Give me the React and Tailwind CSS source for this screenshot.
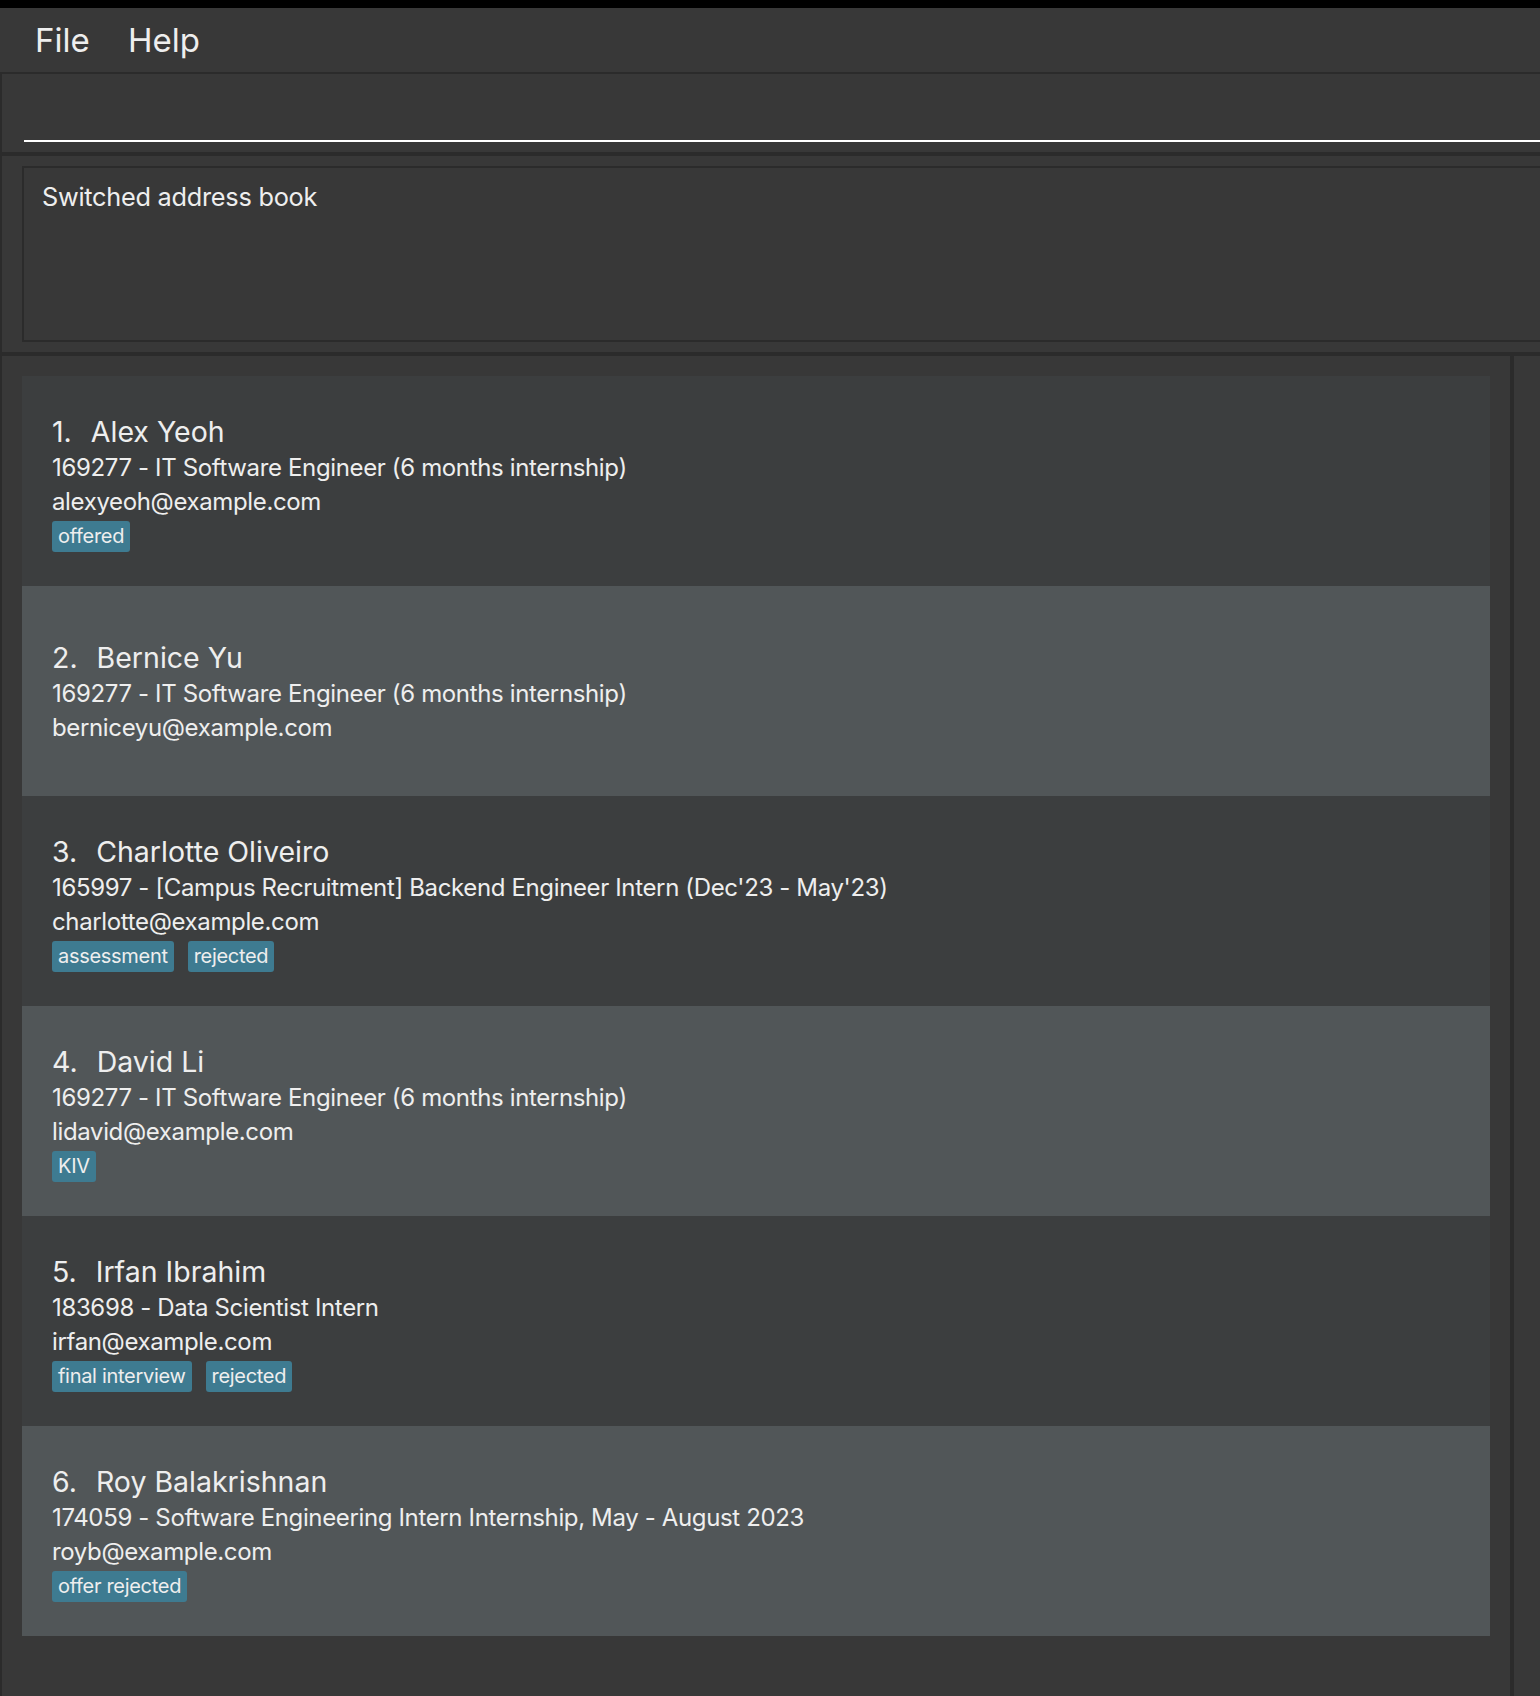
import React from "react";

const people = [
  { name: "Alex Yeoh", job: "169277 - IT Software Engineer (6 months internship)", email: "alexyeoh@example.com", tags: ["offered"] },
  { name: "Bernice Yu", job: "169277 - IT Software Engineer (6 months internship)", email: "berniceyu@example.com", tags: [] },
  { name: "Charlotte Oliveiro", job: "165997 - [Campus Recruitment] Backend Engineer Intern (Dec'23 - May'23)", email: "charlotte@example.com", tags: ["assessment", "rejected"] },
  { name: "David Li", job: "169277 - IT Software Engineer (6 months internship)", email: "lidavid@example.com", tags: ["KIV"] },
  { name: "Irfan Ibrahim", job: "183698 - Data Scientist Intern", email: "irfan@example.com", tags: ["final interview", "rejected"] },
  { name: "Roy Balakrishnan", job: "174059 - Software Engineering Intern Internship, May - August 2023", email: "royb@example.com", tags: ["offer rejected"] },
];

function Card({ p, i }) {
  const even = i % 2 === 1;
  return (
    <div className={`h-[210px] w-[1468px] flex flex-col justify-center pl-[30px] pt-[4px] ${even ? "bg-[#515658]" : "bg-[#3c3e3f]"}`}>
      <div className="flex items-baseline text-[28.5px] leading-[34px] text-[#eeeeee]">
        <span className="mr-[19px]">{i + 1}.</span>
        <span>{p.name}</span>
      </div>
      <div className="mt-[2px] text-[24px] leading-[34px] tracking-[-0.015em] text-[#eeeeee]">{p.job}</div>
      <div className="text-[24px] leading-[34px] tracking-[-0.015em] text-[#eeeeee]">{p.email}</div>
      {p.tags.length > 0 && (
        <div className="mt-[2px] flex gap-[14px]">
          {p.tags.map((t) => (
            <span key={t} className="h-[31px] px-[6px] flex items-center rounded-[3px] bg-[#3e7b91] text-[20px] tracking-[-0.015em] text-[#eeeeee]">
              {t}
            </span>
          ))}
        </div>
      )}
    </div>
  );
}

export default function App() {
  return (
    <div className="w-[1540px] h-[1696px] overflow-hidden bg-[#383838] flex flex-col" style={{ fontFamily: "Inter, 'Noto Sans', sans-serif" }}>
      <div className="h-[8px] bg-black shrink-0" />
      <div className="h-[64px] shrink-0 flex items-center pl-[35px] pt-[2px] text-[33px] text-[#eeeeee]">
        <span className="w-[93px]">File</span>
        <span>Help</span>
      </div>
      <div className="h-[2px] bg-[#2b2b2b] shrink-0" />
      <div className="flex-1 flex flex-col border-l-2 border-[#2b2b2b] min-h-0">
        <div className="h-[78px] shrink-0 pt-[66px] pl-[22px]">
          <div className="h-[2px] bg-white" />
        </div>
        <div className="h-[4px] bg-[#2b2b2b] shrink-0" />
        <div className="h-[196px] shrink-0 pt-[10px] pb-[10px] pl-[20px] flex flex-col">
          <div className="flex-1 border-2 border-r-0 border-[#2b2b2b] pl-[18px] pt-[10px] text-[25.3px] tracking-[-0.01em] text-[#eeeeee]">
            Switched address book
          </div>
        </div>
        <div className="h-[4px] bg-[#2b2b2b] shrink-0" />
        <div className="flex-1 flex min-h-0">
          <div className="w-[1508px] pl-[20px] pt-[20px] flex flex-col">
            {people.map((p, i) => (
              <Card key={i} p={p} i={i} />
            ))}
          </div>
          <div className="w-[4px] bg-[#2b2b2b]" />
          <div className="flex-1" />
        </div>
      </div>
    </div>
  );
}
